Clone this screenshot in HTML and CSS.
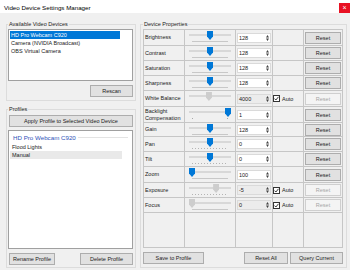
FILE: index.html
```html
<!DOCTYPE html>
<html>
<head>
	<meta charset="utf-8">
	<title>Video Device Settings Manager</title>
	<link rel="stylesheet" href="styles.css">
</head>
<body>
	<div class="titlebar">
		<span class="title">Video Device Settings Manager</span>
		<span class="close">&#215;</span>
	</div>
	<div class="main">
		<div class="left">
			<fieldset class="group devices">
				<legend>Available Video Devices</legend>
				<ul class="list device-list">
					<li class="sel">HD Pro Webcam C920</li>
					<li>Camera (NVIDIA Broadcast)</li>
					<li>OBS Virtual Camera</li>
				</ul>
				<div class="btn-row end">
					<button class="btn rescan">Rescan</button>
				</div>
			</fieldset>
			<fieldset class="group profiles">
				<legend>Profiles</legend>
				<button class="btn apply">Apply Profile to Selected Video Device</button>
				<div class="list profile-list">
					<div class="group-head">HD Pro Webcam C920</div>
					<div class="item">Flood Lights</div>
					<div class="item hover">Manual</div>
				</div>
				<div class="btn-row between">
					<button class="btn rename">Rename Profile</button>
					<button class="btn delete">Delete Profile</button>
				</div>
			</fieldset>
		</div>

		<fieldset class="group props">
			<legend>Device Properties</legend>
			<div class="grid">
				<!-- Brightness -->
				<div class="name">Brightness</div>
				<div class="cell"><div class="slider line"><span class="track"></span><span class="thumb" style="--v:.5"></span></div></div>
				<div class="cell"><div class="num"><span>128</span><svg class="spin" width="5" height="8" viewBox="0 0 5 8"><path d="M1 3.4h3L2.5 1z M1 4.6h3L2.5 7z"/></svg></div></div>
				<div class="cell"></div>
				<div class="cell"><button class="btn reset">Reset</button></div>
				<!-- Contrast -->
				<div class="name">Contrast</div>
				<div class="cell"><div class="slider line"><span class="track"></span><span class="thumb" style="--v:.5"></span></div></div>
				<div class="cell"><div class="num"><span>128</span><svg class="spin" width="5" height="8" viewBox="0 0 5 8"><path d="M1 3.4h3L2.5 1z M1 4.6h3L2.5 7z"/></svg></div></div>
				<div class="cell"></div>
				<div class="cell"><button class="btn reset">Reset</button></div>
				<!-- Saturation -->
				<div class="name">Saturation</div>
				<div class="cell"><div class="slider line"><span class="track"></span><span class="thumb" style="--v:.5"></span></div></div>
				<div class="cell"><div class="num"><span>128</span><svg class="spin" width="5" height="8" viewBox="0 0 5 8"><path d="M1 3.4h3L2.5 1z M1 4.6h3L2.5 7z"/></svg></div></div>
				<div class="cell"></div>
				<div class="cell"><button class="btn reset">Reset</button></div>
				<!-- Sharpness -->
				<div class="name">Sharpness</div>
				<div class="cell"><div class="slider line"><span class="track"></span><span class="thumb" style="--v:.5"></span></div></div>
				<div class="cell"><div class="num"><span>128</span><svg class="spin" width="5" height="8" viewBox="0 0 5 8"><path d="M1 3.4h3L2.5 1z M1 4.6h3L2.5 7z"/></svg></div></div>
				<div class="cell"></div>
				<div class="cell"><button class="btn reset">Reset</button></div>
				<!-- White Balance -->
				<div class="name">White Balance</div>
				<div class="cell"><div class="slider off"><span class="track"></span><span class="thumb" style="--v:.47"></span></div></div>
				<div class="cell"><div class="num off"><span>4000</span><svg class="spin" width="5" height="8" viewBox="0 0 5 8"><path d="M1 3.4h3L2.5 1z M1 4.6h3L2.5 7z"/></svg></div></div>
				<div class="cell auto"><svg class="check" width="7" height="7" viewBox="0 0 7 7"><rect x=".5" y=".5" width="6" height="6"/><path d="M1.5 3.6l1.4 1.4 2.6-3.2"/></svg>Auto</div>
				<div class="cell"><button class="btn reset" disabled>Reset</button></div>
				<!-- Backlight -->
				<div class="name">Backlight<br>Compensation</div>
				<div class="cell"><div class="slider ends"><span class="track"></span><span class="thumb" style="--v:1"></span></div></div>
				<div class="cell"><div class="num"><span>1</span><svg class="spin" width="5" height="8" viewBox="0 0 5 8"><path d="M1 3.4h3L2.5 1z M1 4.6h3L2.5 7z"/></svg></div></div>
				<div class="cell"></div>
				<div class="cell"><button class="btn reset">Reset</button></div>
				<!-- Gain -->
				<div class="name">Gain</div>
				<div class="cell"><div class="slider line"><span class="track"></span><span class="thumb" style="--v:.5"></span></div></div>
				<div class="cell"><div class="num"><span>128</span><svg class="spin" width="5" height="8" viewBox="0 0 5 8"><path d="M1 3.4h3L2.5 1z M1 4.6h3L2.5 7z"/></svg></div></div>
				<div class="cell"></div>
				<div class="cell"><button class="btn reset">Reset</button></div>
				<!-- Pan -->
				<div class="name">Pan</div>
				<div class="cell"><div class="slider dots"><span class="track"></span><span class="thumb" style="--v:.5"></span></div></div>
				<div class="cell"><div class="num"><span>0</span><svg class="spin" width="5" height="8" viewBox="0 0 5 8"><path d="M1 3.4h3L2.5 1z M1 4.6h3L2.5 7z"/></svg></div></div>
				<div class="cell"></div>
				<div class="cell"><button class="btn reset">Reset</button></div>
				<!-- Tilt -->
				<div class="name">Tilt</div>
				<div class="cell"><div class="slider dots"><span class="track"></span><span class="thumb" style="--v:.5"></span></div></div>
				<div class="cell"><div class="num"><span>0</span><svg class="spin" width="5" height="8" viewBox="0 0 5 8"><path d="M1 3.4h3L2.5 1z M1 4.6h3L2.5 7z"/></svg></div></div>
				<div class="cell"></div>
				<div class="cell"><button class="btn reset">Reset</button></div>
				<!-- Zoom -->
				<div class="name">Zoom</div>
				<div class="cell"><div class="slider line"><span class="track"></span><span class="thumb" style="--v:0"></span></div></div>
				<div class="cell"><div class="num"><span>100</span><svg class="spin" width="5" height="8" viewBox="0 0 5 8"><path d="M1 3.4h3L2.5 1z M1 4.6h3L2.5 7z"/></svg></div></div>
				<div class="cell"></div>
				<div class="cell"><button class="btn reset">Reset</button></div>
				<!-- Exposure -->
				<div class="name">Exposure</div>
				<div class="cell"><div class="slider dots off"><span class="track"></span><span class="thumb" style="--v:.67"></span></div></div>
				<div class="cell"><div class="num off"><span>-5</span><svg class="spin" width="5" height="8" viewBox="0 0 5 8"><path d="M1 3.4h3L2.5 1z M1 4.6h3L2.5 7z"/></svg></div></div>
				<div class="cell auto"><svg class="check" width="7" height="7" viewBox="0 0 7 7"><rect x=".5" y=".5" width="6" height="6"/><path d="M1.5 3.6l1.4 1.4 2.6-3.2"/></svg>Auto</div>
				<div class="cell"><button class="btn reset" disabled>Reset</button></div>
				<!-- Focus -->
				<div class="name">Focus</div>
				<div class="cell"><div class="slider line off"><span class="track"></span><span class="thumb" style="--v:0"></span></div></div>
				<div class="cell"><div class="num off"><span>0</span><svg class="spin" width="5" height="8" viewBox="0 0 5 8"><path d="M1 3.4h3L2.5 1z M1 4.6h3L2.5 7z"/></svg></div></div>
				<div class="cell auto"><svg class="check" width="7" height="7" viewBox="0 0 7 7"><rect x=".5" y=".5" width="6" height="6"/><path d="M1.5 3.6l1.4 1.4 2.6-3.2"/></svg>Auto</div>
				<div class="cell"><button class="btn reset" disabled>Reset</button></div>
				<!-- empty space at the bottom of the table -->
				<div class="cell"></div>
				<div class="cell"></div>
				<div class="cell"></div>
				<div class="cell"></div>
				<div class="cell"></div>
			</div>
			<div class="btn-row">
				<button class="btn save">Save to Profile</button>
				<button class="btn reset-all">Reset All</button>
				<button class="btn query">Query Current</button>
			</div>
		</fieldset>
	</div>
</body>
</html>
```

FILE: styles.css
```css
*{margin:0;padding:0;box-sizing:border-box;list-style:none;}
body{width:350px;height:270px;overflow:hidden;background:#f0f0f0;color:#1a1a1a;font-family:"Liberation Sans",Arial,sans-serif;font-size:5.5px;}

/* window title */
.titlebar{height:13px;background:#fff;display:flex;justify-content:space-between;align-items:flex-start;}
.title{margin:5px 0 0 4px;font-size:6.2px;line-height:6px;color:#000;}
.close{width:11px;height:10px;margin-top:3px;background:#e81123;color:#fff;font-size:7px;line-height:10px;text-align:center;}

.main{display:flex;gap:4px;padding:8px 0 0 6px;}
.left{width:130px;display:flex;flex-direction:column;}

/* group boxes */
.group{border:1px solid #dcdcdc;min-width:0;}
.group legend{padding:0 1px;line-height:6px;font-size:5.5px;}
.devices{padding:2px 2px 3px 1px;}
.profiles{margin-top:5px;padding:3px 2px 2px 1px;}
.props{width:207px;padding:2px 3px 2px 2px;}

/* buttons */
.btn{display:block;height:12px;background:#e1e1e1;border:1px solid #adadad;font-family:inherit;font-size:5.5px;color:#1a1a1a;}
.btn:disabled{background:#f4f4f4;border-color:#cfcfcf;color:#a6a6a6;}
.btn-row{display:flex;margin-top:4px;}
.btn-row.end{justify-content:flex-end;}
.btn-row.between{justify-content:space-between;padding-left:1px;}
.rescan{width:43px;}
.apply{width:124px;margin-left:1px;}
.rename{width:46px;}
.delete{width:53px;}
.save{width:61px;}
.reset-all{width:44px;margin-left:auto;}
.query{width:53px;margin-left:2px;}

/* list boxes */
.list{background:#fff;border:1px solid #a0a0a0;}
.device-list{height:52px;padding-top:1px;}
.device-list li{width:110px;height:8px;line-height:8px;margin-left:1px;padding-left:1px;}
.device-list li.sel{background:#0078d7;color:#fff;}
.profile-list{height:119px;margin-top:3px;padding-top:1px;}
.group-head{display:flex;align-items:center;gap:2px;height:8px;margin:1px 4px 2px 4px;font-size:6.2px;color:#2f52b8;}
.group-head::after{content:"";flex:1;height:1px;background:#e3e3e3;}
.profile-list .item{width:112px;height:8px;line-height:8px;margin-left:1px;padding-left:2px;}
.profile-list .item.hover{background:#e9e9e9;}

/* property table */
.grid{display:grid;grid-template-columns:40px 50px 36px 30px 38px;grid-template-rows:15px 14px 14px 14px 15px 15px 13px 14px 14px 15px 14px 14px 1fr;gap:1px;height:219px;background:#c6c6c6;border:1px solid #c6c6c6;}
.grid > div{background:#f0f0f0;}
.name{display:flex;align-items:center;padding-left:1px;line-height:7px;}
.cell{display:flex;align-items:center;}

.slider{position:relative;width:42px;height:100%;margin-left:4px;}
.track{position:absolute;left:0;right:0;top:4px;height:2px;background:#d8d8d8;}
.thumb{position:absolute;top:1px;left:calc((100% - 6px) * var(--v));width:6px;height:9px;background:#0078d7;clip-path:polygon(0 0,100% 0,100% 62%,50% 100%,0 62%);}
.slider.off .thumb{background:#cdcdcd;}
.slider.line::after,.slider.dots::after,.slider.ends::after{content:"";position:absolute;left:3px;right:3px;top:11px;height:1px;}
.slider.line::after{background:#c8c8c8;}
.slider.dots::after{background:repeating-linear-gradient(90deg,#b4b4b4 0 1px,transparent 1px 3px);}
.slider.ends::after{background:linear-gradient(90deg,#a8a8a8 0 1px,transparent 1px calc(100% - 1px),#a8a8a8 calc(100% - 1px));}

.num{display:flex;justify-content:space-between;align-items:center;width:34px;height:10px;margin-left:1px;padding-left:1px;background:#fff;border:1px solid #dadada;}
.num.off{background:#ececec;}
.spin{fill:#444;}

.auto{gap:2px;padding-left:0;}
.check rect{fill:#fff;stroke:#333;}
.check path{fill:none;stroke:#222;stroke-width:.9;}

.reset{width:36px;margin-left:1px;}
```
